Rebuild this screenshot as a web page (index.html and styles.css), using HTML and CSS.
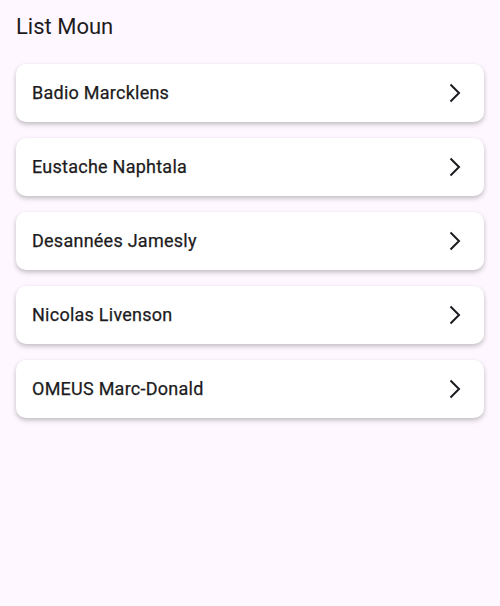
FILE: index.html
```html
<!DOCTYPE html>
<html>
<head>
<meta charset="utf-8">
<link rel="stylesheet" href="styles.css">
</head>
<body>
<div class="page">
  <h1 class="title">List Moun</h1>
  <div class="list">
    <div class="card"><span class="name">Badio Marcklens</span><svg class="chev" viewBox="0 0 16 20"><path d="M2.5 1.5 11 10l-8.5 8.5" /></svg></div>
    <div class="card"><span class="name">Eustache Naphtala</span><svg class="chev" viewBox="0 0 16 20"><path d="M2.5 1.5 11 10l-8.5 8.5" /></svg></div>
    <div class="card"><span class="name">Desannées Jamesly</span><svg class="chev" viewBox="0 0 16 20"><path d="M2.5 1.5 11 10l-8.5 8.5" /></svg></div>
    <div class="card"><span class="name">Nicolas Livenson</span><svg class="chev" viewBox="0 0 16 20"><path d="M2.5 1.5 11 10l-8.5 8.5" /></svg></div>
    <div class="card"><span class="name">OMEUS Marc-Donald</span><svg class="chev" viewBox="0 0 16 20"><path d="M2.5 1.5 11 10l-8.5 8.5" /></svg></div>
  </div>
</div>
</body>
</html>
```
FILE: styles.css
```css
html, body {
  margin: 0;
  padding: 0;
  background: #fef7ff;
  font-family: Roboto, "Noto Sans", sans-serif;
  color: #1d1b20;
}
.page {
  width: 500px;
  height: 606px;
  padding: 12px 16px 0;
  box-sizing: border-box;
}
.title {
  margin: 0;
  font-size: 22px;
  font-weight: 400;
  line-height: 30px;
}
.list {
  margin-top: 22px;
  display: flex;
  flex-direction: column;
  gap: 16px;
}
.card {
  height: 58px;
  background: #ffffff;
  border-radius: 10px;
  box-shadow: 0 2px 4px rgba(0,0,0,0.18), 0 3px 6px rgba(0,0,0,0.08);
  display: flex;
  align-items: center;
  justify-content: space-between;
  padding: 0 20px 0 16px;
}
.name {
  font-size: 18px;
  font-weight: 400;
  line-height: 24px;
  letter-spacing: 0.25px;
  -webkit-text-stroke: 0.25px #1d1b20;
}
.chev {
  width: 16px;
  height: 20px;
  margin-top: -1px;
  fill: none;
  stroke: #1d1b20;
  stroke-width: 2;
}
```
